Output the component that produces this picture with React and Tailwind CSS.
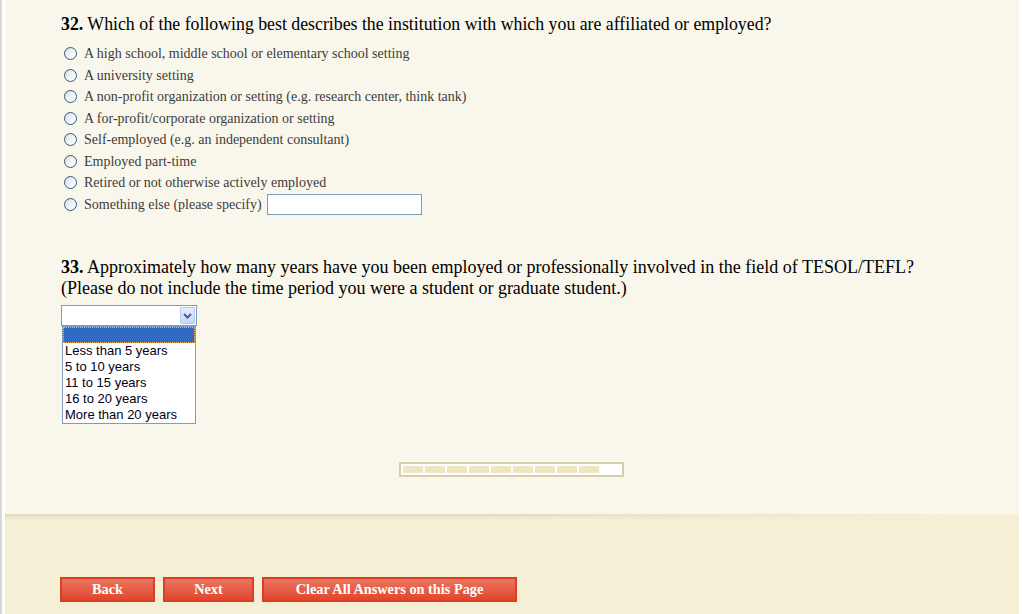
import React from 'react';

const options32 = [
  'A high school, middle school or elementary school setting',
  'A university setting',
  'A non-profit organization or setting (e.g. research center, think tank)',
  'A for-profit/corporate organization or setting',
  'Self-employed (e.g. an independent consultant)',
  'Employed part-time',
  'Retired or not otherwise actively employed',
];

const years = ['Less than 5 years', '5 to 10 years', '11 to 15 years', '16 to 20 years', 'More than 20 years'];

const Radio = () => (
  <span className="inline-block w-[13px] h-[13px] rounded-full border border-[#2c5a84] bg-gradient-to-br from-[#d6d9dc] via-[#f2f3f4] to-white shrink-0" />
);

const App = () => {
  return (
    <div className="flex w-[1022px] h-[614px] bg-white font-['Liberation_Serif',serif]">
      <div className="w-[2px] bg-[#d8d8d8]" />
      <div className="w-[3px] bg-white" />
      <div className="flex flex-col w-[1014px]">
        {/* question panel */}
        <div className="relative h-[514px] bg-[#f9f7eb] pl-[56px] pt-[14px]">
          <h2 className="text-[17.8px] leading-[21px] text-black">
            <b>32.</b> Which of the following best describes the institution with which you are affiliated or employed?
          </h2>
          <div className="mt-[8px] pl-[3px] text-[14px] text-[#3c3c3c]">
            {options32.map((o) => (
              <label key={o} className="flex items-center gap-[7px] h-[21.5px]">
                <Radio />
                <span>{o}</span>
              </label>
            ))}
            <label className="flex items-center gap-[7px] h-[21.5px]">
              <Radio />
              <span>Something else (please specify)</span>
              <span className="-ml-[2px] w-[155px] h-[21px] border border-[#7f9db9] bg-white" />
            </label>
          </div>

          <h2 className="mt-[42px] text-[18px] leading-[21px] text-black w-[900px]">
            <b>33.</b> Approximately how many years have you been employed or professionally involved in the field of TESOL/TEFL?
            <br />
            (Please do not include the time period you were a student or graduate student.)
          </h2>

          <div className="mt-[6px] w-[136px] font-['Liberation_Sans',sans-serif]">
            <div className="flex justify-end h-[21px] border border-[#7f9db9] bg-white p-px">
              <span className="flex items-center justify-center w-[15px] h-[17px] border border-[#b4c8f6] bg-gradient-to-b from-[#e6eefc] to-[#c4d6f8] rounded-[1px]">
                <svg width="9" height="6" viewBox="0 0 9 6">
                  <path d="M1 1 L4.5 4.5 L8 1" fill="none" stroke="#4d6185" strokeWidth="2" />
                </svg>
              </span>
            </div>
            <div className="mx-px border border-[#7f9db9] bg-white text-[13px] leading-[16px] text-[#000014]">
              <div className="h-[16px] bg-[#316ac5] border border-dotted border-[#e8b060]" />
              {years.map((y) => (
                <div key={y} className="pl-[2px]">{y}</div>
              ))}
            </div>
          </div>

          <div className="absolute left-[394px] top-[462px] w-[225px] h-[15px] border-2 border-[#d3cfae] bg-white flex items-center gap-[2px] pl-[2px]">
            {Array.from({ length: 9 }).map((_, i) => (
              <span key={i} className="w-[20px] h-[7px] bg-[#eee6c1]" />
            ))}
          </div>
          <div className="absolute left-0 -bottom-[6px] w-[940px] h-[6px] bg-gradient-to-r from-[#d8d4b8] via-[#d8d4b8] to-transparent opacity-80 [mask-image:linear-gradient(to_bottom,black,transparent)]" />
        </div>

        {/* nav panel */}
        <div className="flex-1 bg-[#f5efd6] pl-[55px] pt-[63px] flex gap-[8px] items-start">
          {['Back', 'Next', 'Clear All Answers on this Page'].map((t, i) => (
            <button
              key={t}
              className={`h-[25px] border-2 border-[#e03c22] bg-gradient-to-b from-[#ea7560] to-[#e0452c] text-white font-bold text-[14.3px] ${i === 0 ? 'w-[95px]' : i === 1 ? 'w-[91px]' : 'w-[255px]'}`}
            >
              {t}
            </button>
          ))}
        </div>
      </div>
      <div className="w-[3px] bg-white" />
    </div>
  );
};

export default App;
